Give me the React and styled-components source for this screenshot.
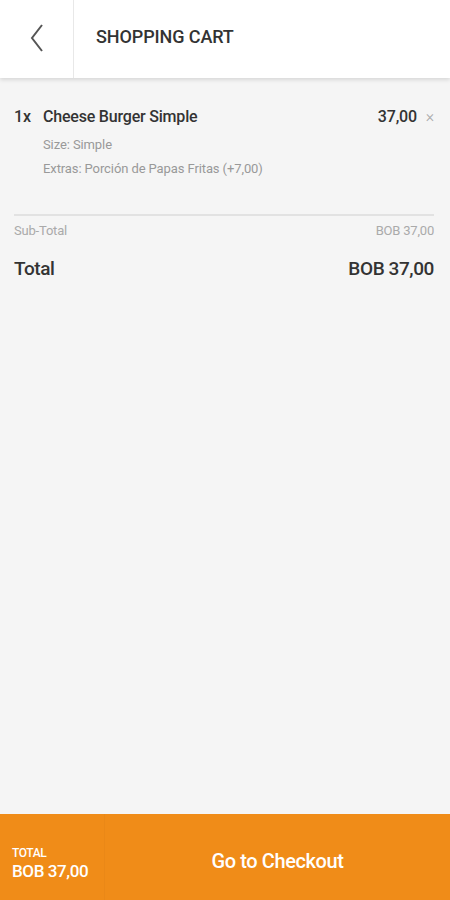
import React from "react";
import styled, { createGlobalStyle } from "styled-components";

const GlobalStyle = createGlobalStyle`
  html, body {
    margin: 0;
    padding: 0;
    background: #f5f5f5;
  }
  body {
    font-family: Roboto, "Liberation Sans", sans-serif;
  }
`;

const StyledPage = styled.div`
  width: 450px;
  height: 900px;
  display: flex;
  flex-direction: column;
  background: #f5f5f5;
  overflow: hidden;
`;

const StyledHeader = styled.header`
  height: 78px;
  flex-shrink: 0;
  display: flex;
  background: white;
  box-shadow: 0 2px 4px rgba(0, 0, 0, 0.12);
  position: relative;
  z-index: 1;
`;

const StyledBack = styled.div`
  width: 73px;
  display: flex;
  align-items: center;
  justify-content: center;
  padding-bottom: 3px;
  border-right: 1px solid #e8e8e8;
  color: #555;
`;

const StyledTitle = styled.h1`
  margin: 0;
  padding: 0 0 6px 22px;
  display: flex;
  align-items: center;
  font-size: 18px;
  font-weight: 500;
  color: #333;
  letter-spacing: -0.1px;
`;

const StyledContent = styled.main`
  flex: 1;
  padding: 0 16px 0 14px;
`;

const StyledItem = styled.div`
  padding-top: 29px;
  padding-bottom: 38px;
  border-bottom: 2px solid #e2e2e2;
`;

const StyledItemRow = styled.div`
  display: flex;
  align-items: baseline;
  font-size: 16px;
  font-weight: 500;
  color: #333;
  letter-spacing: -0.2px;
`;

const StyledQty = styled.span`
  width: 29px;
`;

const StyledName = styled.span`
  flex: 1;
`;

const StyledRemove = styled.span`
  margin-left: 9px;
  color: #aaa;
  font-weight: 300;
  font-size: 16px;
`;

const StyledDetail = styled.div`
  padding-left: 29px;
  font-size: 13px;
  color: #999;
  letter-spacing: -0.1px;
  margin-top: ${(p) => p.$top}px;
`;

const StyledSumRow = styled.div`
  display: flex;
  justify-content: space-between;
  align-items: baseline;
  font-size: ${(p) => (p.$big ? 19 : 13)}px;
  font-weight: ${(p) => (p.$big ? 500 : 400)};
  color: ${(p) => (p.$big ? "#333" : "#aaa")};
  letter-spacing: ${(p) => (p.$big ? -0.4 : -0.2)}px;
  margin-top: ${(p) => p.$top}px;
`;

const StyledFooter = styled.footer`
  height: 86px;
  flex-shrink: 0;
  display: flex;
  background: #f08c18;
  color: white;
`;

const StyledFooterTotal = styled.div`
  width: 105px;
  padding: 14px 0 0 12px;
  box-sizing: border-box;
  display: flex;
  flex-direction: column;
  justify-content: center;
  border-right: 1px solid rgba(0, 0, 0, 0.025);
  font-weight: 500;
  letter-spacing: -0.4px;
`;

const StyledFooterLabel = styled.span`
  font-size: 12px;
  line-height: 14px;
`;

const StyledFooterAmount = styled.span`
  font-size: 17px;
  line-height: 22px;
`;

const StyledCheckout = styled.button`
  flex: 1;
  border: none;
  background: transparent;
  color: white;
  font-family: inherit;
  font-size: 20px;
  font-weight: 500;
  letter-spacing: -0.4px;
  padding: 8px 0 0 0;
`;

export default function App() {
  return (
    <>
      <GlobalStyle />
      <StyledPage>
        <StyledHeader>
          <StyledBack>
            <svg width="16" height="30" viewBox="0 0 16 30" fill="none">
              <path d="M13 2 L3 15 L13 28" stroke="#555" strokeWidth="2" />
            </svg>
          </StyledBack>
          <StyledTitle>SHOPPING CART</StyledTitle>
        </StyledHeader>
        <StyledContent>
          <StyledItem>
            <StyledItemRow>
              <StyledQty>1x</StyledQty>
              <StyledName>Cheese Burger Simple</StyledName>
              <span>37,00</span>
              <StyledRemove>×</StyledRemove>
            </StyledItemRow>
            <StyledDetail $top={11}>Size: Simple</StyledDetail>
            <StyledDetail $top={9}>Extras: Porción de Papas Fritas (+7,00)</StyledDetail>
          </StyledItem>
          <StyledSumRow $top={7}>
            <span>Sub-Total</span>
            <span>BOB 37,00</span>
          </StyledSumRow>
          <StyledSumRow $big $top={19}>
            <span>Total</span>
            <span>BOB 37,00</span>
          </StyledSumRow>
        </StyledContent>
        <StyledFooter>
          <StyledFooterTotal>
            <StyledFooterLabel>TOTAL</StyledFooterLabel>
            <StyledFooterAmount>BOB 37,00</StyledFooterAmount>
          </StyledFooterTotal>
          <StyledCheckout>Go to Checkout</StyledCheckout>
        </StyledFooter>
      </StyledPage>
    </>
  );
}
